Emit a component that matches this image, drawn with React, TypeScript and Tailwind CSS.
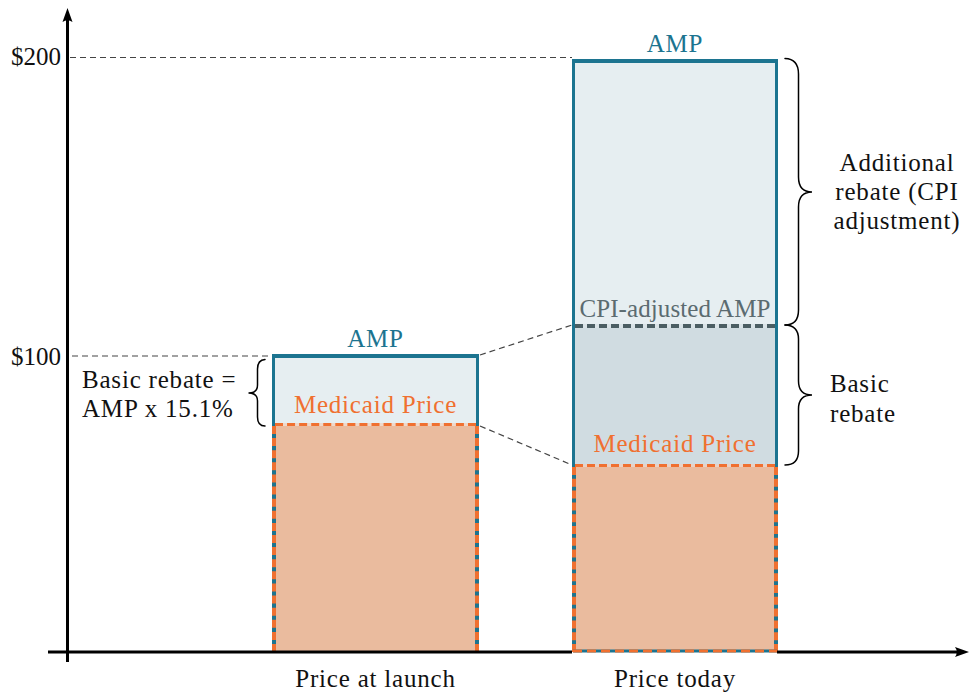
import React from "react";

// drawing layer: axes, guide lines, connectors and braces
function Strokes() {
  return (
    <svg
      className="pointer-events-none absolute inset-0"
      width={976}
      height={699}
      viewBox="0 0 976 699"
      fill="none"
    >
      <g stroke="#444" strokeWidth={1.2} strokeDasharray="6 4">
        <line x1={70} y1={57.5} x2={572} y2={57.5} />
        <line x1={72} y1={356} x2={272} y2={356} />
        <line x1={480} y1={355} x2={572} y2={325} />
        <line x1={480} y1={426} x2={572} y2={465} />
      </g>

      {/* right bar sits on the axis with a dashed edge */}
      <line x1={573} y1={651} x2={777} y2={651} stroke="#1c7490" strokeWidth={3} />
      <line
        x1={573}
        y1={651}
        x2={777}
        y2={651}
        stroke="#f07030"
        strokeWidth={3}
        strokeDasharray="9 5"
      />

      <g stroke="#000" strokeWidth={3}>
        <line x1={67.5} y1={18} x2={67.5} y2={662} />
        <line x1={48} y1={652} x2={572} y2={652} />
        <line x1={777} y1={652} x2={960} y2={652} />
      </g>
      <path d="M67.5 8 L72.5 22 Q67.5 18.5 62.5 22 Z" fill="#000" />
      <path d="M969 652 L955 647 Q958.5 652 955 657 Z" fill="#000" />

      <g stroke="#000" strokeWidth={1.5} strokeLinecap="round">
        <path d="M265 359.5 Q257.5 360 257.5 369 L257.5 385 Q257.5 393 248.5 393 Q257.5 393 257.5 401 L257.5 417 Q257.5 426 265 426" />
        <path d="M785 58.5 Q798.5 59 798.5 74 L798.5 177 Q798.5 192 812 192 Q798.5 192 798.5 207 L798.5 310 Q798.5 325 785 325" />
        <path d="M785 325 Q798.5 325.5 798.5 339 L798.5 381 Q798.5 395 812 395 Q798.5 395 798.5 409 L798.5 451 Q798.5 465 785 465" />
      </g>
    </svg>
  );
}

function DashedRule({ color, gap }: { color: string; gap: string }) {
  // dashed line across a bar; the gaps show the bar's own background
  return (
    <div className={`border-x-[3.5px] border-[#1c7490] ${gap}`}>
      <div className={`border-t-4 border-dashed ${color}`} />
    </div>
  );
}

function PriceBase({ className }: { className: string }) {
  // peach block whose dashed orange sides let the teal outline show through
  return (
    <div
      className={`flex -mt-px border-x-4 border-dashed border-[#f07030] bg-[#1c7490] ${className}`}
    >
      <div className="flex-1 bg-[#eabb9e]" />
    </div>
  );
}

function LaunchBar() {
  return (
    <div className="flex w-[207px] flex-col">
      <div className="mb-[3px] text-center text-[#1c7490]">AMP</div>
      <div className="flex h-[69px] flex-col items-center justify-end border-x-[3.5px] border-t-4 border-[#1c7490] bg-[#e6eef1] pb-[6px] text-[#f07030]">
        Medicaid Price
      </div>
      <DashedRule color="border-[#f07030]" gap="bg-[#eed8ca]" />
      <PriceBase className="h-[226px]" />
    </div>
  );
}

function TodayBar() {
  return (
    <div className="flex w-[206px] flex-col">
      <div className="mb-[3px] text-center text-[#1c7490]">AMP</div>
      <div className="flex h-[265px] flex-col items-center justify-end border-x-[3.5px] border-t-4 border-[#1c7490] bg-[#e6eef1] pb-[3px] tracking-[0.1px] text-[#5b6b70]">
        CPI-adjusted AMP
      </div>
      <DashedRule color="border-[#4b5e63]" gap="bg-[#d9e3e7]" />
      <div className="flex h-[136px] flex-col items-center justify-end border-x-[3.5px] border-[#1c7490] bg-[#d0dce1] pb-[8px] text-[#f07030]">
        Medicaid Price
      </div>
      <DashedRule color="border-[#f07030]" gap="bg-[#e8d2c6]" />
      <PriceBase className="h-[185px]" />
    </div>
  );
}

function Note({
  className,
  lines,
}: {
  className: string;
  lines: string[];
}) {
  return (
    <div className={`absolute flex flex-col ${className}`}>
      {lines.map((line) => (
        <span key={line}>{line}</span>
      ))}
    </div>
  );
}

export default function App() {
  return (
    <div className="relative h-[699px] w-[976px] overflow-hidden bg-white font-['Liberation_Serif',serif] text-[25px] leading-none tracking-[0.8px] whitespace-nowrap text-[#111]">
      {/* plot: bars stand on the x axis */}
      <div className="flex h-[652px] items-end gap-[93px] pl-[272px]">
        <LaunchBar />
        <TodayBar />
      </div>

      {/* category labels */}
      <div className="flex gap-[93px] pl-[272px] pt-[14px]">
        <div className="w-[207px] text-center">Price at launch</div>
        <div className="w-[206px] text-center">Price today</div>
      </div>

      {/* y-axis ticks */}
      <div className="absolute left-0 top-[44px] w-[61px] text-right tracking-normal">$200</div>
      <div className="absolute left-0 top-[344px] w-[61px] text-right tracking-normal">$100</div>

      {/* brace notes */}
      <Note
        className="left-[82px] top-[367px] gap-[4px]"
        lines={["Basic rebate =", "AMP x 15.1%"]}
      />
      <Note
        className="left-[817px] top-[150px] w-[160px] items-center gap-[4px]"
        lines={["Additional", "rebate (CPI", "adjustment)"]}
      />
      <Note className="left-[830px] top-[371px] gap-[5px]" lines={["Basic", "rebate"]} />

      <Strokes />
    </div>
  );
}
